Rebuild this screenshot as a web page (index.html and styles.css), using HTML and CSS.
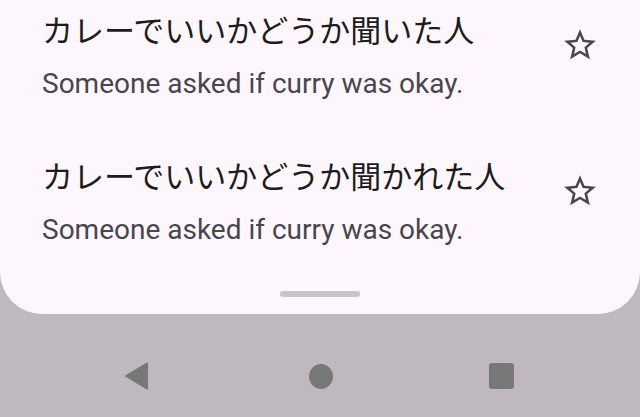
FILE: index.html
```html
<!DOCTYPE html>
<html lang="ja">
<head>
  <meta charset="UTF-8" />
  <meta name="viewport" content="width=device-width, initial-scale=1.0" />
  <title>Favorites</title>
  <link rel="stylesheet" href="styles.css">
</head>
<body>
  <div class="sheet">
    <ul class="list">
      <li class="item">
        <div class="texts">
          <div class="title">カレーでいいかどうか聞いた人</div>
          <div class="subtitle">Someone asked if curry was okay.</div>
        </div>
        <button class="star-btn" aria-label="favorite">
          <svg viewBox="0 0 24 24" width="38" height="38"><path d="M22 9.24l-7.19-.62L12 2 9.19 8.63 2 9.24l5.460 4.73L5.82 21 12 17.27 18.18 21l-1.63-7.03L22 9.24zM12 15.4l-3.76 2.27 1-4.28-3.32-2.88 4.38-.38L12 6.1l1.71 4.04 4.38.38-3.32 2.88 1 4.28L12 15.4z"/></svg>
        </button>
      </li>
      <li class="item">
        <div class="texts">
          <div class="title">カレーでいいかどうか聞かれた人</div>
          <div class="subtitle">Someone asked if curry was okay.</div>
        </div>
        <button class="star-btn" aria-label="favorite">
          <svg viewBox="0 0 24 24" width="38" height="38"><path d="M22 9.24l-7.19-.62L12 2 9.19 8.63 2 9.24l5.46 4.73L5.82 21 12 17.27 18.18 21l-1.63-7.03L22 9.24zM12 15.4l-3.76 2.27 1-4.28-3.32-2.88 4.38-.38L12 6.1l1.71 4.04 4.38.38-3.32 2.88 1 4.28L12 15.4z"/></svg>
        </button>
      </li>
    </ul>
    <div class="handle"></div>
  </div>

  <nav class="navbar">
    <svg class="nav-back" viewBox="0 0 26 28" width="26" height="28"><polygon points="2,14 23,1.5 23,26.5"/></svg>
    <span class="nav-home"></span>
    <span class="nav-recent"></span>
  </nav>
</body>
</html>
```

FILE: styles.css
```css
/* Tela base */
body {
  margin: 0;
  height: 417px;
  overflow: hidden;
  background-color: #bfb8bf;
  font-family: Roboto, "Noto Sans CJK JP", sans-serif;
}

/* Folha com cantos arredondados */
.sheet {
  background-color: #fdf7fd;
  height: 314px;
  border-radius: 0 0 42px 42px;
  overflow: hidden;
  display: flex;
  flex-direction: column;
}

.list {
  list-style: none;
  margin: -18px 0 0;
  padding: 0;
  flex: 1;
}

.item {
  display: flex;
  align-items: flex-start;
  padding: 27px 41px 27px 42px;
}

.texts {
  flex: 1;
}

.title {
  font-family: "Noto Sans CJK JP", sans-serif;
  font-size: 31px;
  line-height: 40px;
  color: #1d1b20;
}

.subtitle {
  margin-top: 17px;
  font-size: 28px;
  line-height: 35px;
  color: #49454f;
}

.star-btn {
  margin-top: 17px;
  padding: 0;
  border: none;
  background: none;
  width: 38px;
  height: 38px;
}

.star-btn svg {
  display: block;
  fill: #49454f;
}

.handle {
  width: 80px;
  height: 6px;
  border-radius: 3px;
  background-color: #c9c3ca;
  margin: 0 auto 17px;
}

/* Barra de navegação */
.navbar {
  display: flex;
  justify-content: center;
  align-items: center;
  gap: 156px;
  padding: 48px 2px 0 0;
}

.nav-back {
  display: block;
  margin-right: 3px;
  fill: #787878;
  stroke: #787878;
  stroke-width: 2;
  stroke-linejoin: round;
}

.nav-home {
  width: 24px;
  height: 25px;
  border-radius: 50%;
  background-color: #787878;
}

.nav-recent {
  width: 25px;
  height: 26px;
  border-radius: 3px;
  background-color: #787878;
}
```
